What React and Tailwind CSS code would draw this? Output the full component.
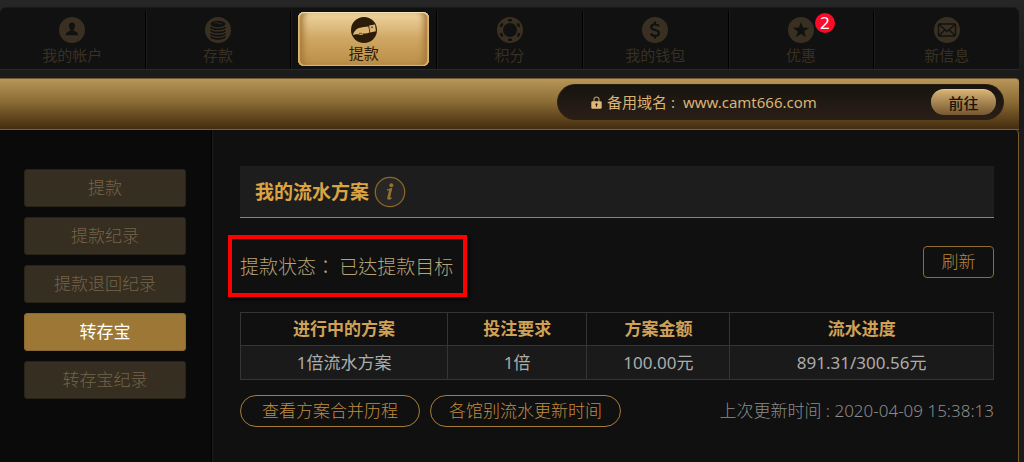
import React, { useState } from 'react'
import clsx from 'clsx'

const CircleIcon = ({ children }) => (
  <svg viewBox="0 0 26 26" className="size-[26px]" aria-hidden="true">
    <circle cx="13" cy="13" r="13" fill="currentColor" />
    {children}
  </svg>
)

const UserIcon = () => (
  <CircleIcon>
    <path
      d="M13 5.500c-2 0-3.100 1.500-3.100 3.500 0 1.300.6 2.600 1.500 3.400v1.400c-1.500.6-4.400 1.400-4.600 4.500h12.400c-.2-3.100-3.100-3.900-4.600-4.500v-1.400c.9-.8 1.500-2.100 1.500-3.400 0-2-1.100-3.500-3.100-3.500z"
      fill="#111"
    />
  </CircleIcon>
)

const CoinsIcon = () => (
  <CircleIcon>
    <ellipse cx="13" cy="7" rx="7.500" ry="3.200" fill="#111" />
    <path d="M9.500 6c1.500-1 3-.3 4 .3s2 .6 3 .2" fill="none" stroke="currentColor" strokeWidth="1" />
    <g fill="none" stroke="#111" strokeWidth="1.700">
      <path d="M5.800 10c1 3 13.400 3 14.400 0" />
      <path d="M5.800 13.200c1 3 13.400 3 14.400 0" />
      <path d="M5.800 16.400c1 3 13.400 3 14.400 0" />
      <path d="M5.800 19.600c1 3 13.400 3 14.400 0" />
    </g>
  </CircleIcon>
)

const HandIcon = () => (
  <CircleIcon>
    <path
      d="M2 18c.8-3.400 2.800-5.700 6-6.900 3-1 6.400-1.300 9.400-1.700l1.100 6.200c-1.700.8-3.300 1-5.200.9l-2.300-.1 1.500.8c-1.500.9-3 .8-4.500.4-2.100-.5-4-.4-6 .4z"
      fill="#dcb473"
    />
    <path d="M11 16.500c-1-.3-2-.3-3-.1" stroke="#2b1c08" strokeWidth=".7" fill="none" />
    <path d="M18.100 8.600l6-1.200.8 6.800-5.700 1.300z" fill="#dcb473" />
    <circle cx="21" cy="10.200" r=".8" fill="#2b1c08" />
  </CircleIcon>
)

const ChipIcon = () => (
  <CircleIcon>
    <circle cx="13" cy="13" r="7" fill="#111" />
    <g fill="#111">
      <rect x="11" y="2" width="4" height="2.400" rx=".8" />
      <rect x="11" y="2" width="4" height="2.400" rx=".8" transform="rotate(60 13 13)" />
      <rect x="11" y="2" width="4" height="2.400" rx=".8" transform="rotate(120 13 13)" />
      <rect x="11" y="2" width="4" height="2.400" rx=".8" transform="rotate(180 13 13)" />
      <rect x="11" y="2" width="4" height="2.400" rx=".8" transform="rotate(240 13 13)" />
      <rect x="11" y="2" width="4" height="2.400" rx=".8" transform="rotate(300 13 13)" />
    </g>
  </CircleIcon>
)

const DollarIcon = () => (
  <CircleIcon>
    <path
      d="M17 9.300c-.8-1.500-2.300-2-4-2-2.200 0-3.800 1-3.800 2.700 0 4.200 7.800 1.800 7.800 6 0 1.900-1.700 2.800-4 2.800-2 0-3.500-.7-4.200-2.300M13 4.500v3M13 18.500v3"
      fill="none"
      stroke="#111"
      strokeWidth="2.200"
    />
  </CircleIcon>
)

const StarIcon = () => (
  <CircleIcon>
    <path d="M13 5l2.100 5.600 5.900.2-4.700 3.700 1.700 5.800-5-3.400-5 3.400 1.700-5.800L5 10.800l5.900-.2z" fill="#111" />
  </CircleIcon>
)

const MailIcon = () => (
  <CircleIcon>
    <g fill="none" stroke="#111" strokeWidth="1.400">
      <rect x="4.500" y="7" width="17" height="12" rx="1" />
      <path d="M5 7.500l8 7 8-7M5 18.500l5.800-5.500M21 18.500l-5.800-5.500" />
    </g>
  </CircleIcon>
)

const LockIcon = () => (
  <svg viewBox="0 0 11 13" className="h-[13px] w-[11px]" aria-hidden="true">
    <path d="M3 6V3.600a2.500 2.500 0 015 0V6" fill="none" stroke="#a98650" strokeWidth="1.300" />
    <rect x=".3" y="5.300" width="10.400" height="7.500" rx="1.200" fill="#e0b877" />
    <circle cx="5.500" cy="8.400" r="1.100" fill="#2a1e14" />
    <path d="M5.500 8.500v2.300" stroke="#2a1e14" />
  </svg>
)

const InfoIcon = () => (
  <svg viewBox="0 0 32 32" className="size-8" aria-hidden="true">
    <circle cx="16" cy="16" r="14.700" fill="#282725" stroke="#8a6729" strokeWidth="1.300" />
    <circle cx="17.300" cy="9.300" r="2" fill="#94702f" />
    <path d="M13 14.100c1.600-.2 3-.6 4.200-1.200l-2.300 9.300c-.3 1.100.7 1 2.600-.6" fill="none" stroke="#94702f" strokeWidth="1.500" />
    <path d="M16.600 13.500l-2.200 8.700" stroke="#94702f" strokeWidth="2.500" strokeLinecap="round" />
  </svg>
)

const NAV = [
  { label: '我的帐户', Icon: UserIcon },
  { label: '存款', Icon: CoinsIcon },
  { label: '提款', Icon: HandIcon },
  { label: '积分', Icon: ChipIcon },
  { label: '我的钱包', Icon: DollarIcon },
  { label: '优惠', Icon: StarIcon, badge: 2 },
  { label: '新信息', Icon: MailIcon },
]

const SIDE = ['提款', '提款纪录', '提款退回纪录', '转存宝', '转存宝纪录']

const PLANS = [{ name: '1倍流水方案', require: '1倍', amount: '100.00元', progress: '891.31/300.56元' }]

function TopNav({ active, onChange }) {
  return (
    <nav className="flex rounded-t-md border-b border-[#292929] bg-[#111] pt-[3px] shadow-[0_-1px_0_#191919]">
      {NAV.map(({ label, Icon, badge }, idx) => {
        const on = active === label
        return (
          <div
            key={label}
            className={clsx('relative flex-1 pb-[3px]', idx > 0 && 'border-l border-black shadow-[inset_1px_0_0_#1b1b1b]')}
          >
            <div className="px-[7px] pt-px">
              <button
                type="button"
                onClick={() => onChange(label)}
                className={clsx(
                  'flex h-[54px] w-full flex-col items-center rounded-md pt-[5px] text-[15px] leading-5',
                  on
                    ? 'bg-linear-to-b from-[#f0d7a2] via-[#cfa663] via-50% to-[#b98d45] text-[#2b1c08] shadow-[inset_0_-1px_1px_#d9bc62,inset_0_1px_1px_#f8e6c0,inset_2px_0_1px_#d3b072,inset_-2px_0_1px_#d3b072,inset_8px_0_6px_-3px_#a27636,inset_-8px_0_6px_-3px_#a27636]'
                    : 'text-[#393021]',
                )}
              >
                <Icon />
                <span className={on ? 'mt-0' : 'mt-0.5'}>{label}</span>
              </button>
            </div>
            {badge && (
              <span className="absolute top-0.5 left-1/2 ml-[14px] flex size-5 items-center justify-center rounded-full bg-[#fb0a2a] text-[17px] leading-5 text-white">
                {badge}
              </span>
            )}
          </div>
        )
      })}
    </nav>
  )
}

function DomainBar() {
  return (
    <div className="mt-2 flex h-[52px] justify-end rounded-tr-sm border-t border-b border-t-[#72592f] border-b-[#7d6030] bg-linear-to-b from-[#b89659] via-[#8c6d36] via-45% to-[#442c0e] pt-[5px] pr-[15px]">
      <div className="flex h-9 w-[447px] items-center rounded-full border border-[#2a1e0f] bg-linear-to-b from-[#16130f] to-[#2a1f17] pr-[7px] pl-[33px] text-[15px] leading-5 text-[#d9b475]">
        <LockIcon />
        <span className="ml-[5px] whitespace-nowrap">备用域名 :</span>
        <a href="#domain" className="ml-2 leading-5">
          www.camt666.com
        </a>
        <button
          type="button"
          className="ml-auto h-[26px] w-[65px] rounded-full border-t border-[#e8c68d] bg-linear-to-b from-[#d8b273] to-[#755931] text-[15px] leading-5 font-medium text-[#1b1309]"
        >
          前往
        </button>
      </div>
    </div>
  )
}

function Sidebar({ active, onChange }) {
  return (
    <aside className="flex w-[212px] shrink-0 flex-col gap-2.5 border-r border-black bg-[#0a0a0a] pt-[39px] pr-[25px] pl-6">
      {SIDE.map((label) => (
        <button
          key={label}
          type="button"
          onClick={() => onChange(label)}
          className={clsx(
            'h-[38px] rounded-[3px] border text-[17px] leading-6',
            active === label
              ? 'border-[#8a6a31] bg-[#9c7735] text-white'
              : 'border-[#29241a] bg-[#362e20] font-light text-[#75644a]',
          )}
        >
          {label}
        </button>
      ))}
    </aside>
  )
}

function PlanTable() {
  return (
    <table className="w-full table-fixed border-collapse text-center text-[17px] leading-6">
      <thead>
        <tr className="h-[33px] text-[#d0a257]">
          <th className="w-[27.5%] border border-[#353535]">进行中的方案</th>
          <th className="w-[18.5%] border border-[#353535]">投注要求</th>
          <th className="w-[19%] border border-[#353535]">方案金额</th>
          <th className="w-[35%] border border-[#353535]">流水进度</th>
        </tr>
      </thead>
      <tbody>
        {PLANS.map((plan) => (
          <tr key={plan.name} className="h-[34px] bg-[#1a1a1a] text-[#acacac]">
            <td className="border border-[#353535]">{plan.name}</td>
            <td className="border border-[#353535]">{plan.require}</td>
            <td className="border border-[#353535]">{plan.amount}</td>
            <td className="border border-[#353535]">{plan.progress}</td>
          </tr>
        ))}
      </tbody>
    </table>
  )
}

export default function App() {
  const [tab, setTab] = useState('提款')
  const [side, setSide] = useState('转存宝')

  return (
    <div className="flex min-h-screen flex-col bg-[#1d1d1d] bg-linear-to-b from-[#262626] to-[#1b1b1b] to-[72px] pt-2 pr-[5px] font-['Noto_Sans','Noto_Sans_CJK_SC',sans-serif]">
      <TopNav active={tab} onChange={setTab} />
      <DomainBar />
      <div className="flex flex-1 rounded-tr-sm border-r border-[#7a5c2b] bg-[#101010]">
        <Sidebar active={side} onChange={setSide} />
        <main className="flex-1 border-l border-[#1c1c1c] pt-9 pr-6 pl-[27px]">
          <h1 className="flex h-[52px] items-center gap-[5px] border-b border-[#b07d42] bg-[#1d1d1d] pl-[15px] text-[19px] leading-6 font-bold text-[#dba443]">
            我的流水方案
            <InfoIcon />
          </h1>

          <div className="mt-[17px] flex items-start justify-between">
            <p className="-ml-3 flex h-[62px] items-center border-4 border-[#fd0000] pr-2.5 pl-2 font-['Noto_Sans_CJK_TC',sans-serif] text-[19px] leading-6 font-light text-[#b8a379] shadow-[2px_2px_4px_#000]">
              提款状态： 已达提款目标
            </p>
            <button
              type="button"
              className="mt-[11px] h-8 w-[71px] rounded-sm border border-[#8f6c2f] text-[17px] leading-6 font-light text-[#b8873a]"
            >
              刷新
            </button>
          </div>

          <div className="mt-[15px]">
            <PlanTable />
          </div>

          <div className="mt-[15px] mb-9 flex items-center gap-2.5 text-[17px] leading-6 font-light">
            <button type="button" className="h-8 rounded-full border border-[#a87d37] px-[21px] text-[#c08d40]">
              查看方案合并历程
            </button>
            <button type="button" className="h-8 rounded-full border border-[#a87d37] px-[18px] text-[#c08d40]">
              各馆别流水更新时间
            </button>
            <span className="ml-auto text-[#8c8c8c]">上次更新时间 : 2020-04-09 15:38:13</span>
          </div>
        </main>
      </div>
    </div>
  )
}
